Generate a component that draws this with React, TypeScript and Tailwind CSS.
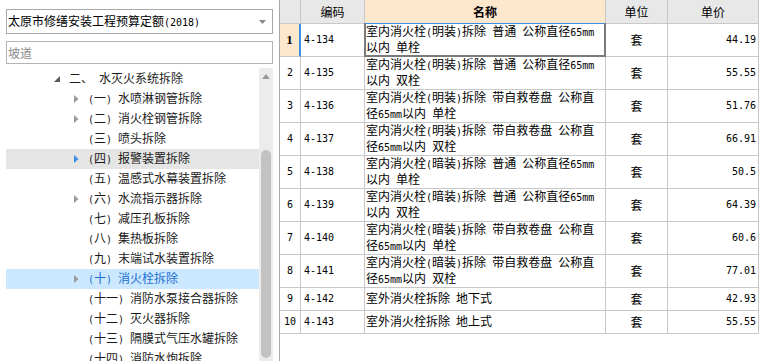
import React from "react";

const CJK = "font-['Noto_Sans_CJK_SC',sans-serif]";
const MONO = "font-['DejaVu_Sans_Mono',monospace] text-[10px]";

function Mixed({ text }: { text: string }) {
  const parts = text.split(/([\x20-\x7E]+)/).filter((p) => p.length > 0);
  return (
    <>
      {parts.map((p, i) =>
        /^[\x20-\x7E]+$/.test(p) ? (
          <span key={i} className={`${MONO} whitespace-pre`}>
            {p}
          </span>
        ) : (
          <span key={i}>{p}</span>
        )
      )}
    </>
  );
}

type TreeItem = { label: string; arrow: boolean; state?: "hover" | "selected" };

const treeChildren: TreeItem[] = [
  { label: "(一) 水喷淋钢管拆除", arrow: true },
  { label: "(二) 消火栓钢管拆除", arrow: true },
  { label: "(三) 喷头拆除", arrow: false },
  { label: "(四) 报警装置拆除", arrow: true, state: "hover" },
  { label: "(五) 温感式水幕装置拆除", arrow: false },
  { label: "(六) 水流指示器拆除", arrow: true },
  { label: "(七) 减压孔板拆除", arrow: false },
  { label: "(八) 集热板拆除", arrow: false },
  { label: "(九) 末端试水装置拆除", arrow: false },
  { label: "(十) 消火栓拆除", arrow: true, state: "selected" },
  { label: "(十一) 消防水泵接合器拆除", arrow: false },
  { label: "(十二) 灭火器拆除", arrow: false },
  { label: "(十三) 隔膜式气压水罐拆除", arrow: false },
  { label: "(十四) 消防水炮拆除", arrow: false },
];

type Row = { n: number; code: string; name: string[]; price: string };

const rows: Row[] = [
  { n: 1, code: "4-134", name: ["室内消火栓(明装)拆除 普通 公称直径65mm", "以内 单栓"], price: "44.19" },
  { n: 2, code: "4-135", name: ["室内消火栓(明装)拆除 普通 公称直径65mm", "以内 双栓"], price: "55.55" },
  { n: 3, code: "4-136", name: ["室内消火栓(明装)拆除 带自救卷盘 公称直", "径65mm以内 单栓"], price: "51.76" },
  { n: 4, code: "4-137", name: ["室内消火栓(明装)拆除 带自救卷盘 公称直", "径65mm以内 双栓"], price: "66.91" },
  { n: 5, code: "4-138", name: ["室内消火栓(暗装)拆除 普通 公称直径65mm", "以内 单栓"], price: "50.5" },
  { n: 6, code: "4-139", name: ["室内消火栓(暗装)拆除 普通 公称直径65mm", "以内 双栓"], price: "64.39" },
  { n: 7, code: "4-140", name: ["室内消火栓(暗装)拆除 带自救卷盘 公称直", "径65mm以内 单栓"], price: "60.6" },
  { n: 8, code: "4-141", name: ["室内消火栓(暗装)拆除 带自救卷盘 公称直", "径65mm以内 双栓"], price: "77.01" },
  { n: 9, code: "4-142", name: ["室外消火栓拆除 地下式"], price: "42.93" },
  { n: 10, code: "4-143", name: ["室外消火栓拆除 地上式"], price: "55.55" },
];

function ChildArrow({ color }: { color: string }) {
  return (
    <svg width="5" height="8" viewBox="0 0 5 8">
      <path d="M0 0 L4.5 4 L0 8 Z" fill={color} />
    </svg>
  );
}

function Tree() {
  return (
    <div className="flex flex-col pt-px">
      <div className="flex h-[20px] items-center pl-[45px]">
        <div className="flex w-[12px] justify-center">
          <svg width="6" height="6" viewBox="0 0 6 6">
            <path d="M6 0 L6 6 L0 6 Z" fill="#5a5a5a" />
          </svg>
        </div>
        <span className="ml-[6px] text-[#1a1a1a]">
          <Mixed text="二、 水灭火系统拆除" />
        </span>
      </div>
      {treeChildren.map((it) => {
        const bg =
          it.state === "hover" ? "bg-[#e5e5e5]" : it.state === "selected" ? "bg-[#cce8ff]" : "";
        const tc = it.state === "selected" ? "text-[#1a6fd3]" : "text-[#1a1a1a]";
        return (
          <div key={it.label} className={`flex h-[20px] items-center pl-[64px] ${bg}`}>
            <div className="flex w-[12px] justify-center">
              {it.arrow && <ChildArrow color={it.state === "hover" ? "#3b8ee8" : "#9a9a9a"} />}
            </div>
            <span className={`ml-[6px] whitespace-nowrap ${tc}`}>
              <Mixed text={it.label} />
            </span>
          </div>
        );
      })}
    </div>
  );
}

function LeftPanel() {
  return (
    <div className="flex h-full w-[279px] shrink-0 flex-col px-[6px] pt-[9px]">
      <div className="flex h-[25px] items-center justify-between border border-[#a9a9a9] bg-white pl-[1px] pr-[6px]">
        <span className="whitespace-nowrap text-black">
          <Mixed text="太原市修缮安装工程预算定额(2018)" />
        </span>
        <svg width="7" height="4" viewBox="0 0 7 4">
          <path d="M0 0 L7 0 L3.5 4 Z" fill="#8a8a8a" />
        </svg>
      </div>
      <div className="mt-[7px] flex h-[23px] items-center border border-[#b4b4b4] bg-white pl-[1px]">
        <span className="text-[#8a8a8a]">坡道</span>
      </div>
      <div className="mt-[4px] flex min-h-0 flex-1 overflow-hidden">
        <div className="w-[253px] shrink-0 overflow-hidden">
          <Tree />
        </div>
        <div className="flex w-[14px] shrink-0 flex-col bg-[#ececec]">
          <div className="flex h-[16px] items-center justify-center">
            <svg width="8" height="5" viewBox="0 0 8 5">
              <path d="M0 5 L4 0 L8 5 Z" fill="#9a9a9a" />
            </svg>
          </div>
          <div className="h-[66px]" />
          <div className="mx-auto h-[208px] w-[10px] rounded-[5px] bg-[#c2c2c2]" />
        </div>
      </div>
    </div>
  );
}

const cellB = "border-r border-b border-[#c8c8c8]";

function Grid() {
  return (
    <div className="flex h-full flex-1 flex-col border-l border-[#a8a8a8] bg-white">
      <div className="flex h-[24px] shrink-0">
        <div className={`w-[21px] shrink-0 bg-[#e8e8e8] ${cellB}`} />
        <div className={`flex w-[64px] shrink-0 items-center justify-center bg-[#e8e8e8] ${cellB}`}>编码</div>
        <div className={`flex w-[241px] shrink-0 items-center justify-center bg-[#fde7cd] font-bold ${cellB}`}>名称</div>
        <div className={`flex w-[62px] shrink-0 items-center justify-center bg-[#e8e8e8] ${cellB}`}>单位</div>
        <div className={`flex w-[91px] shrink-0 items-center justify-center bg-[#e8e8e8] ${cellB}`}>单价</div>
      </div>
      {rows.map((r) => {
        const h = r.name.length > 1 ? "h-[33px]" : "h-[23px]";
        const first = r.n === 1;
        return (
          <div key={r.n} className={`flex shrink-0 ${h}`}>
            <div
              className={`flex w-[21px] shrink-0 items-center justify-center border-b border-[#c8c8c8] ${
                first
                  ? "border-r-2 border-r-[#3f8ee6] bg-[#fde7cd] font-['Liberation_Serif',serif] text-[13px] font-bold"
                  : `border-r ${MONO}`
              }`}
            >
              {r.n}
            </div>
            <div className={`flex w-[64px] shrink-0 items-center pl-[3px] ${MONO} ${cellB}`}>{r.code}</div>
            <div className={`relative flex w-[241px] shrink-0 items-center pl-[1px] leading-[14.5px] ${cellB}`}>
              <div className="whitespace-nowrap">
                {r.name.map((line, i) => (
                  <div key={i}>
                    <Mixed text={line} />
                  </div>
                ))}
              </div>
              {first && (
                <div className="absolute -left-px -top-px -right-px -bottom-px border-2 border-t border-[#7a7a7a] border-t-[#3f8ee6]" />
              )}
            </div>
            <div className={`flex w-[62px] shrink-0 items-center justify-center ${cellB}`}>套</div>
            <div className={`flex w-[91px] shrink-0 items-center justify-end pr-[2px] ${MONO} ${cellB}`}>
              {r.price}
            </div>
          </div>
        );
      })}
    </div>
  );
}

export default function App() {
  return (
    <div className={`flex h-[361px] w-[771px] overflow-hidden bg-white text-[12px] leading-[16px] text-black ${CJK}`}>
      <LeftPanel />
      <Grid />
    </div>
  );
}
